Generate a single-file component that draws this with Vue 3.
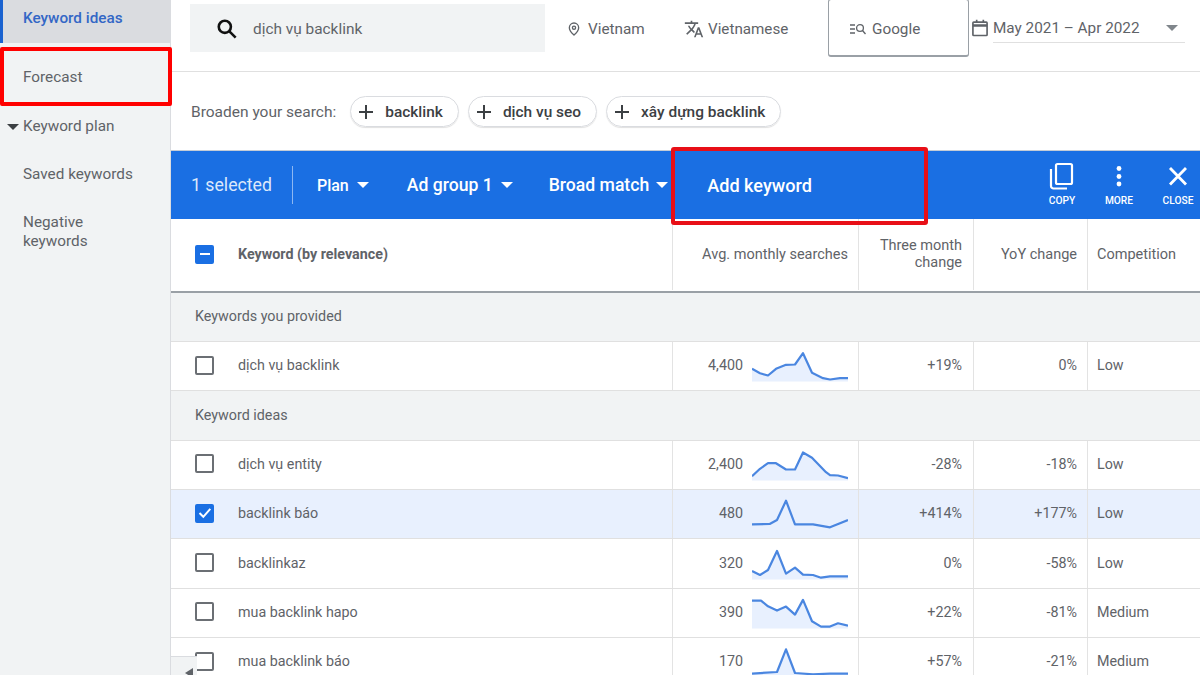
<script setup>
const mkPts = (arr) => arr.map(p => p.join(',')).join(' ')
const rows = [
  { type: 'g', label: 'Keywords you provided' },
  { kw: 'dịch vụ backlink', v: '4,400', t: '+19%', y: '0%', c: 'Low', pts: [[0,17.3],[8,21.7],[16,24],[24,17.3],[34,13.3],[43,13],[51,1.7],[60,21.3],[71,26.7],[78,28],[88,26.7],[96,26.7]] },
  { type: 'g', label: 'Keyword ideas' },
  { kw: 'dịch vụ entity', v: '2,400', t: '-28%', y: '-18%', c: 'Low', pts: [[0,25.7],[8,18.3],[16,12.7],[24,12.7],[34,19],[43,19],[51,2],[60,7.3],[74,21.7],[78,24.7],[86,25],[96,27.7]] },
  { kw: 'backlink báo', v: '480', t: '+414%', y: '+177%', c: 'Low', sel: true, pts: [[0,24.8],[17.7,24.5],[25,20.5],[34,1.2],[43,24.8],[61,24.8],[78,27.8],[96,20.5]] },
  { kw: 'backlinkaz', v: '320', t: '0%', y: '-58%', c: 'Low', pts: [[0,21.5],[8,25.5],[16,20.5],[25,1.5],[34,24.2],[43,18.2],[51,25.2],[61,25.5],[69,28.2],[78,26.8],[96,26.8]] },
  { kw: 'mua backlink hapo', v: '390', t: '+22%', y: '-81%', c: 'Medium', pts: [[0,2.1],[9,2.1],[16,7.8],[25,12.1],[34,8.1],[43,16.1],[51,1.4],[60,22.8],[69,28.1],[78,28.1],[86,24.8],[96,27.1]] },
  { kw: 'mua backlink báo', v: '170', t: '+57%', y: '-21%', c: 'Medium', pts: [[0,26.1],[25,24.5],[34,1.8],[43,25.5],[61,26.8],[78,26.1],[96,26.1]] },
].map(r => r.pts ? { ...r, line: mkPts(r.pts), area: `0,30 ${mkPts(r.pts)} 96,30` } : r)
const chips = ['backlink', 'dịch vụ seo', 'xây dựng backlink']
</script>

<template>
  <div class="page">
    <aside class="side">
      <div class="nav active">Keyword ideas</div>
      <div class="nav forecast">Forecast</div>
      <div class="nav plan"><span class="caret"></span>Keyword plan</div>
      <div class="nav saved">Saved keywords</div>
      <div class="nav negative">Negative<br>keywords</div>
      <div class="redbox"></div>
    </aside>
    <main class="main">
      <header class="top">
        <div class="search">
          <svg width="26" height="26" viewBox="0 0 24 24" fill="none" stroke="#111" stroke-width="2.4"><circle cx="10" cy="10" r="5.6"/><path d="M14.2 14.2 20 20"/></svg>
          <span>dịch vụ backlink</span>
        </div>
        <div class="loc">
          <svg width="16" height="18" viewBox="0 0 24 24" fill="none" stroke="#5f6368" stroke-width="2"><path d="M12 3a7 7 0 0 0-7 7c0 5 7 11 7 11s7-6 7-11a7 7 0 0 0-7-7z"/><circle cx="12" cy="10" r="2.4"/></svg>
          <span>Vietnam</span>
        </div>
        <div class="lang">
          <svg width="20" height="20" viewBox="0 0 24 24" fill="#5f6368"><path d="m12.9 15.1-2.5-2.5c1.7-1.9 3-4.1 3.7-6.5H17V4h-7V2H8v2H1v2h11.2c-.7 1.9-1.7 3.8-3.2 5.4C8 10.400 7.200 9.200 6.600 8h-2c.7 1.600 1.700 3.200 3 4.600l-5.100 5L4 19l5-5 3.100 3.100.8-2zM18.500 10h-2L12 22h2l1.100-3h4.800l1.100 3h2l-4.500-12zm-2.600 7 1.600-4.300 1.600 4.300h-3.200z"/></svg>
          <span>Vietnamese</span>
        </div>
        <div class="google">
          <svg width="18" height="14" viewBox="0 0 18 14" fill="none" stroke="#5f6368" stroke-width="1.300"><path d="M1 3h5M1 7h5M1 11h5"/><circle cx="11" cy="6" r="3.400"/><path d="m13.500 8.500 3 3.500"/></svg>
          <span>Google</span>
        </div>
        <svg class="cal" width="20" height="20" viewBox="0 0 24 24" fill="none" stroke="#5f6368" stroke-width="2"><rect x="3.500" y="5" width="17" height="16" rx="1"/><path d="M3.500 9h17" stroke-width="3"/><path d="M8 2v4M16 2v4"/></svg>
        <div class="date">
          <span>May 2021 – Apr 2022</span>
          <i class="tri gray"></i>
        </div>
      </header>

      <div class="broaden">
        <span class="blabel">Broaden your search:</span>
        <div v-for="c in chips" :key="c" class="chip">
          <svg width="18" height="18" viewBox="0 0 18 18" stroke="#3c4043" stroke-width="2"><path d="M9 2v14M2 9h14"/></svg>
          <span>{{ c }}</span>
        </div>
      </div>

      <div class="bar">
        <span class="selected">1 selected</span>
        <i class="vline"></i>
        <span class="act plan-a">Plan<i class="tri"></i></span>
        <span class="act ad">Ad group 1<i class="tri"></i></span>
        <span class="act broad">Broad match<i class="tri"></i></span>
        <span class="act addk">Add keyword</span>
        <div class="tools">
          <div class="tool copy">
            <svg width="28" height="30" viewBox="0 0 28 30" fill="none" stroke="#fff" stroke-width="2.200"><rect x="8" y="4" width="16" height="20" rx="1.500"/><path d="M3 9v17a2.500 2.500 0 0 0 2.500 2.500H19"/></svg>
            <b>COPY</b>
          </div>
          <div class="tool more">
            <svg width="8" height="30" viewBox="0 0 8 30" fill="#fff"><circle cx="4" cy="8.500" r="2.400"/><circle cx="4" cy="16.500" r="2.400"/><circle cx="4" cy="24" r="2.400"/></svg>
            <b>MORE</b>
          </div>
          <div class="tool close">
            <svg width="22" height="30" viewBox="0 0 22 30" stroke="#fff" stroke-width="2.800"><path d="m3 8 16 16.500M19 8 3 24.500"/></svg>
            <b>CLOSE</b>
          </div>
        </div>
        <div class="redbox2"></div>
      </div>

      <div class="thead">
        <div class="c-check"><span class="box minus"><i></i></span></div>
        <div class="c-kw head-kw">Keyword (by relevance)</div>
        <div class="c-vol h">Avg. monthly searches</div>
        <div class="c-three h">Three month<br>change</div>
        <div class="c-yoy h">YoY change</div>
        <div class="c-comp h">Competition</div>
      </div>

      <template v-for="r in rows" :key="r.kw || r.label">
        <div v-if="r.type === 'g'" class="group">{{ r.label }}</div>
        <div v-else class="row" :class="{ sel: r.sel }">
          <div class="c-check">
            <span v-if="r.sel" class="box checked">
              <svg width="14" height="12" viewBox="0 0 14 12" fill="none" stroke="#fff" stroke-width="2"><path d="m1.500 6 3.800 3.800 7-8"/></svg>
            </span>
            <span v-else class="box"></span>
          </div>
          <div class="c-kw">{{ r.kw }}</div>
          <div class="c-vol vol">
            <span>{{ r.v }}</span>
            <svg class="spark" width="96" height="32" viewBox="0 -1.500 96 32">
              <polygon :points="r.area" fill="#e8f0fe" />
              <polyline :points="r.line" fill="none" stroke="#4a86e0" stroke-width="2.200" stroke-linejoin="round" />
            </svg>
          </div>
          <div class="c-three num">{{ r.t }}</div>
          <div class="c-yoy num">{{ r.y }}</div>
          <div class="c-comp txt">{{ r.c }}</div>
        </div>
      </template>
      <div class="corner"><i></i></div>
    </main>
  </div>
</template>

<style>
html, body { margin: 0; padding: 0; background: #fff; overflow: hidden; }
</style>

<style scoped>
.page { width: 1200px; height: 675px; display: flex; overflow: hidden; font-family: Roboto, "Liberation Sans", sans-serif; color: #5f6368; font-size: 14px; background: #fff; }
.side { width: 171px; flex: none; height: 675px; background: #f1f3f4; position: relative; border-right: 1px solid #dadce0; box-sizing: border-box; }
.nav { padding-left: 23px; color: #5f6368; font-size: 15.300px; line-height: 19px; }
.active { height: 43px; background: #dadce0; border-left: 3px solid #1a62d0; padding-left: 20px; color: #3367c6; font-weight: 500; box-sizing: border-box; padding-top: 9px; }
.forecast { margin-top: 25px; }
.plan { margin-top: 30px; display: flex; align-items: center; }
.caret { width: 0; height: 0; border-left: 6px solid transparent; border-right: 6px solid transparent; border-top: 6px solid #3c4043; margin-left: -16px; margin-right: 4px; }
.saved { margin-top: 29px; }
.negative { margin-top: 29px; }
.redbox { position: absolute; z-index: 1; left: 0; top: 47px; width: 172px; height: 59px; border: 4px solid #f00; box-sizing: border-box; border-radius: 2px; }
.main { flex: 1; min-width: 0; position: relative; overflow: hidden; }
.top { height: 72px; display: flex; align-items: flex-start; border-bottom: 1px solid #e0e0e0; box-sizing: border-box; }
.search { margin: 4px 0 0 19px; width: 355px; height: 48px; background: #f1f3f4; display: flex; align-items: center; padding: 2px 0 0 24px; box-sizing: border-box; gap: 13px; color: #5f6368; font-size: 15.400px; }
.loc { margin: 20px 0 0 21px; display: flex; align-items: center; gap: 6px; font-size: 15.300px; width: 118px; }
.lang { margin: 19px 0 0 0; display: flex; align-items: center; gap: 4px; font-size: 15.200px; width: 144px; }
.google { width: 141px; height: 58px; box-sizing: border-box; margin-top: -1px; border: 1px solid #9aa0a6; border-bottom-width: 2px; border-radius: 3px; display: flex; align-items: center; gap: 5px; padding: 2px 0 0 20px; font-size: 15.300px; }
.cal { margin: 18px 3px 0 1px; }
.date { width: 192px; height: 43px; margin-top: 0; border-bottom: 1px solid #e0e0e0; box-sizing: border-box; display: flex; align-items: center; justify-content: space-between; padding: 13px 7px 0 0; font-size: 15.300px; }
.broaden { height: 78px; display: flex; align-items: center; padding: 1px 0 0 20px; box-sizing: border-box; }
.blabel { font-size: 15.500px; margin-right: 14px; color: #5f6368; }
.chip { height: 31px; box-sizing: border-box; border: 1px solid #dadce0; border-radius: 16px; display: flex; align-items: center; padding: 0 15px 0 6px; gap: 10px; margin-right: 9px; color: #3c4043; font-size: 15.450px; box-shadow: 0 1px 1px #e0e0e0; font-weight: 500; }
.bar { height: 69px; background: #1a6fe3; display: flex; align-items: center; color: #fff; position: relative; border-top: 1px solid #c5ccd6; box-sizing: border-box; font-weight: 500; }
.selected { margin-left: 20px; font-size: 17.700px; color: #dce8fb; font-weight: 400; }
.vline { width: 1px; height: 38px; background: #8db7f2; margin: 0 24px 0 20px; }
.act { font-size: 17.600px; display: flex; align-items: center; }
.plan-a { font-size: 16px; }
.ad { margin-left: 38px; }
.broad { margin-left: 36px; }
.addk { margin-left: 39px; font-size: 18.100px; }
.tri { display: inline-block; width: 0; height: 0; border-left: 6.500px solid transparent; border-right: 6.500px solid transparent; border-top: 6px solid #fff; margin-left: 8px; }
.broad .tri { margin-left: 7px; }
.tri.gray { border-top-color: #80868b; }
.tools { position: absolute; right: 0; top: 0; bottom: 0; width: 180px; }
.tool { position: absolute; top: 9px; display: flex; flex-direction: column; align-items: center; width: 40px; }
.tool b { font-size: 10.200px; font-weight: 500; line-height: 12px; margin-top: 5px; }
.copy { left: 22px; }
.more { left: 79px; }
.close { left: 138px; }
.redbox2 { position: absolute; left: 500px; top: -4px; width: 257px; height: 78px; border: 4px solid #e80f17; box-sizing: border-box; border-radius: 3px; }
.thead, .row { display: flex; align-items: stretch; box-sizing: border-box; }
.thead { height: 73.500px; padding-bottom: 1px; border-bottom: 2px solid #9aa0a6; }
.c-check { width: 67px; flex: none; display: flex; align-items: center; padding-left: 24px; box-sizing: border-box; }
.c-kw { width: 434px; flex: none; display: flex; align-items: center; font-size: 14.300px; color: #5f6368; }
.head-kw { font-weight: 700; font-size: 14.300px; color: #5f6368; }
.c-vol { width: 186px; flex: none; border-left: 1px solid #e3e3e3; box-sizing: border-box; display: flex; align-items: center; justify-content: flex-end; padding: 0 10px 2px 0; }
.c-three { width: 115px; flex: none; border-left: 1px solid #e3e3e3; box-sizing: border-box; display: flex; align-items: center; justify-content: flex-end; padding: 0 11px 2px 0; }
.c-yoy { width: 114px; flex: none; border-left: 1px solid #e3e3e3; box-sizing: border-box; display: flex; align-items: center; justify-content: flex-end; padding: 0 10px 2px 0; }
.c-comp { flex: 1; border-left: 1px solid #e3e3e3; box-sizing: border-box; display: flex; align-items: center; padding: 0 0 2px 9px; }
.c-check, .c-kw { padding-bottom: 2px; }
.thead > div { padding-bottom: 0; }
.h { font-size: 14.500px; color: #5f6368; text-align: right; line-height: 17px; }
.c-comp.h { text-align: left; }
.group { height: 49.500px; background: #f1f3f4; border-bottom: 1px solid #e0e0e0; box-sizing: border-box; display: flex; align-items: center; padding: 0 0 2px 24px; font-size: 14.300px; color: #5f6368; }
.row { height: 49.300px; border-bottom: 1px solid #e0e0e0; background: #fff; }
.row.sel { background: #e8f0fe; }
.vol { gap: 9px; font-size: 14.300px; }
.spark { flex: none; margin-top: 2px; }
.num, .txt { font-size: 14.300px; color: #5f6368; }
.box { width: 19px; height: 19px; box-sizing: border-box; border: 2px solid #6b6f74; border-radius: 2px; display: flex; align-items: center; justify-content: center; background: #fff; }
.box.checked, .box.minus { background: #1a6fe3; border-color: #1a6fe3; }
.box.minus i { width: 10px; height: 2px; background: #fff; }
.corner { position: absolute; left: 0; top: 656px; width: 26px; height: 19px; background: #f1f3f4; border-top: 1px solid #dadce0; }
.corner i { position: absolute; left: 14px; top: 11px; width: 0; height: 0; border-top: 5px solid transparent; border-bottom: 5px solid transparent; border-right: 8px solid #5f6368; }
</style>
